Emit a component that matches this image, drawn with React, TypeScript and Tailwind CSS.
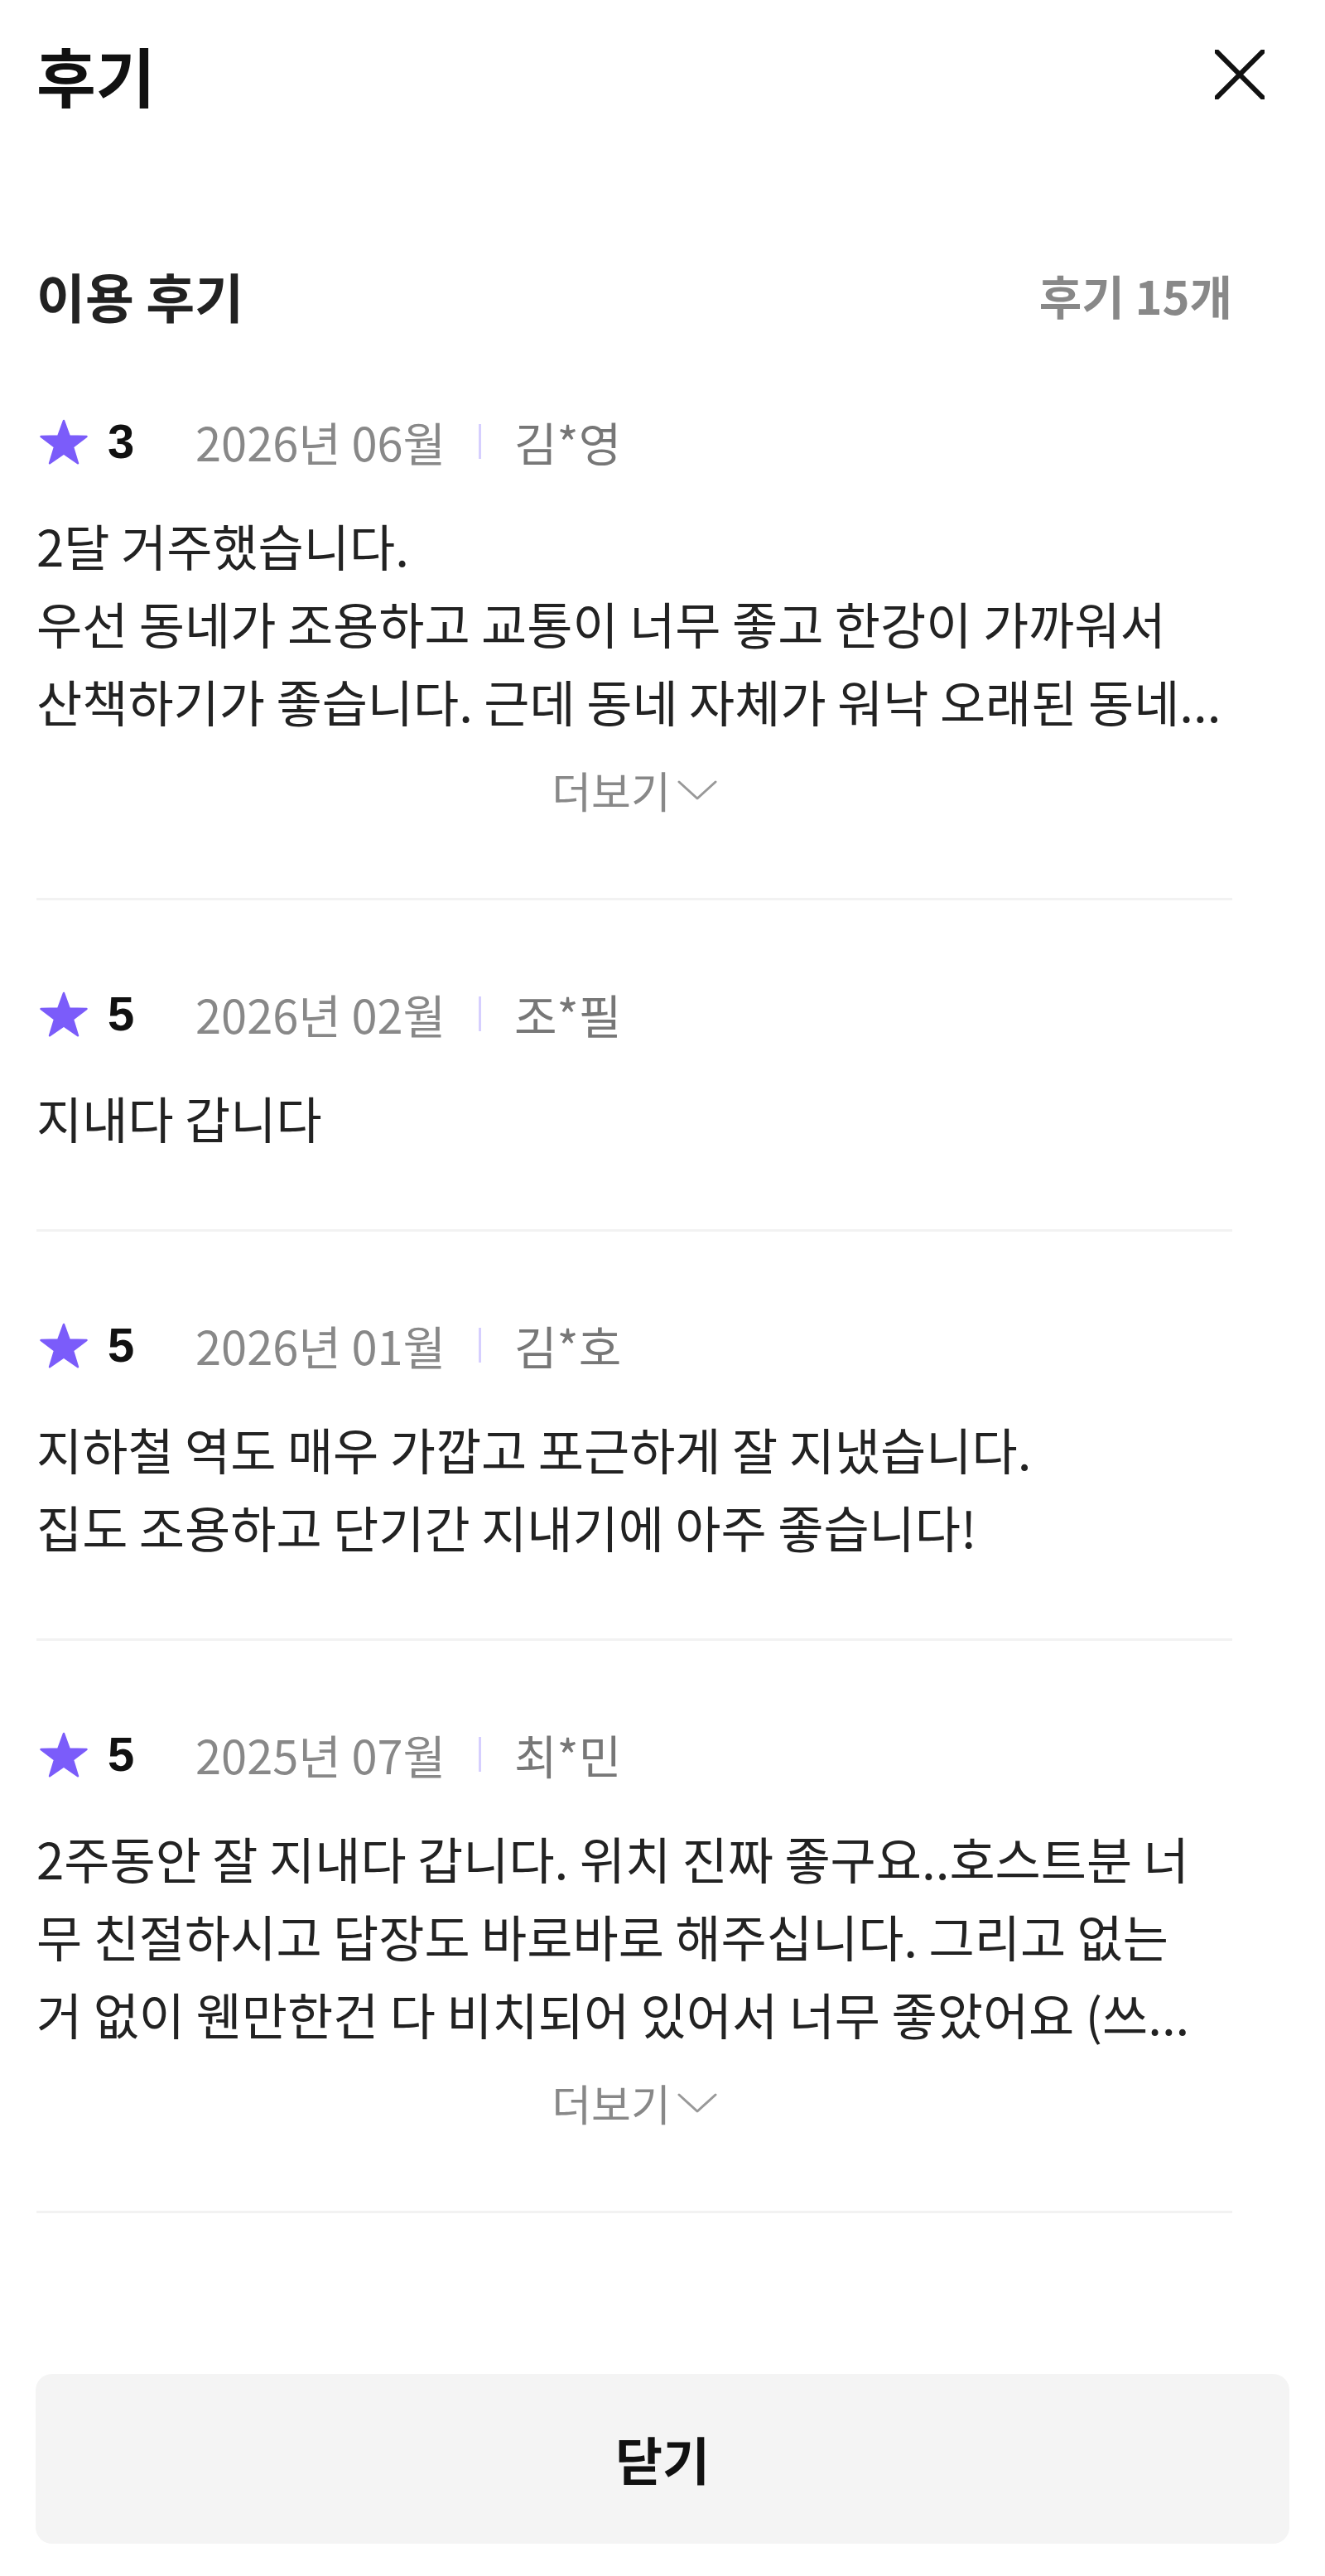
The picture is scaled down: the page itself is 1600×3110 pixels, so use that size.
import React from 'react';

type Review = {
  rating: number;
  date: string;
  name: string;
  text: string;
  more?: boolean;
};

const reviews: Review[] = [
  {
    rating: 3,
    date: '2026년 06월',
    name: '김*영',
    text: '2달 거주했습니다.\n우선 동네가 조용하고 교통이 너무 좋고 한강이 가까워서\n산책하기가 좋습니다. 근데 동네 자체가 워낙 오래된 동네...',
    more: true,
  },
  { rating: 5, date: '2026년 02월', name: '조*필', text: '지내다 갑니다' },
  {
    rating: 5,
    date: '2026년 01월',
    name: '김*호',
    text: '지하철 역도 매우 가깝고 포근하게 잘 지냈습니다.\n집도 조용하고 단기간 지내기에 아주 좋습니다!',
  },
  {
    rating: 5,
    date: '2025년 07월',
    name: '최*민',
    text: '2주동안 잘 지내다 갑니다. 위치 진짜 좋구요..호스트분 너\n무 친절하시고 답장도 바로바로 해주십니다. 그리고 없는\n거 없이 웬만한건 다 비치되어 있어서 너무 좋았어요 (쓰...',
    more: true,
  },
];

function Star() {
  return (
    <svg width="58" height="55" viewBox="0 0 60 57" className="shrink-0">
      <polygon
        points="30,2 37.05,21.29 58.53,21.73 41.41,34.71 47.63,55.27 30,43 12.37,55.27 18.59,34.71 1.47,21.73 22.95,21.29"
        fill="#7B5CFA"
        stroke="#7B5CFA"
        strokeWidth="2.5"
        strokeLinejoin="round"
      />
    </svg>
  );
}

function ReviewItem({ review }: { review: Review }) {
  return (
    <li className="pt-[112px] pb-[88px] border-b-[3px] border-[#f2f2f2]">
      {/* Rating / date / author */}
      <div className="flex items-center h-[50px]">
        <div className="flex items-center w-[192px] pl-[4px]">
          <Star />
          <span className="ml-[24px] text-[58px] font-bold leading-none text-[#111] font-['Liberation_Sans',sans-serif]">
            {review.rating}
          </span>
        </div>
        <span className="text-[56px] leading-none text-[#888]">{review.date}</span>
        <span className="mx-[40px] w-[3px] h-[42px] bg-[#d6cfff]" />
        <span className="text-[56px] leading-none text-[#777]">{review.name}</span>
      </div>

      {/* Body */}
      <p className="mt-[53px] text-[60px] leading-[94px] text-[#222] whitespace-pre">
        {review.text}
      </p>

      {review.more && (
        <button className="mt-[31px] mb-[12px] h-[60px] w-full flex items-center justify-center gap-[8px] text-[52px] leading-none text-[#888]">
          더보기
          <svg width="48" height="24" viewBox="0 0 48 24" fill="none">
            <polyline points="2,2 24,22 46,2" stroke="#999" strokeWidth="3" strokeLinecap="round" strokeLinejoin="round" />
          </svg>
        </button>
      )}
    </li>
  );
}

export default function App() {
  return (
    <div className="w-full min-h-[3110px] bg-white font-['Noto_Sans_CJK_KR','Noto_Sans',sans-serif]">
      {/* Header */}
      <header className="flex items-center justify-between h-[180px] pl-[44px] pr-[73px]">
        <h1 className="text-[78px] font-bold leading-none text-[#111]">후기</h1>
        <button aria-label="닫기">
          <svg width="60" height="60" viewBox="0 0 60 60" fill="none">
            <path d="M2 2 L58 58 M58 2 L2 58" stroke="#111" strokeWidth="6" strokeLinecap="round" />
          </svg>
        </button>
      </header>

      <main className="pl-[44px] pr-[112px]">
        {/* Section title */}
        <div className="mt-[136px] h-[80px] flex items-center justify-between">
          <h2 className="text-[64px] font-bold leading-none text-[#222]">이용 후기</h2>
          <span className="text-[56px] font-semibold leading-none text-[#888]">후기 15개</span>
        </div>

        <ul>
          {reviews.map((r, i) => (
            <ReviewItem key={i} review={r} />
          ))}
        </ul>
      </main>

      {/* Close button */}
      <div className="px-[43px] mt-[194px] pb-[38px]">
        <button className="w-full h-[205px] rounded-[20px] bg-[#f4f4f4] text-[62px] font-bold text-[#111]">
          닫기
        </button>
      </div>
    </div>
  );
}
